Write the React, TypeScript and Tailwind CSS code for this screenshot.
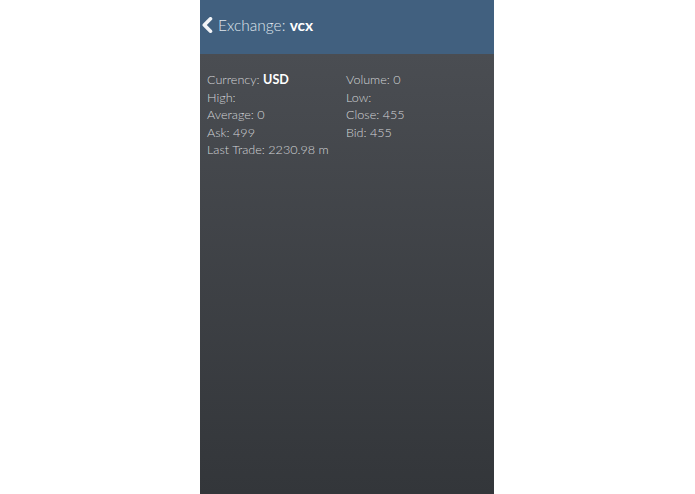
import React from 'react';

const rows: [React.ReactNode, React.ReactNode][] = [
  [<>Currency: <b className="font-bold text-white">USD</b></>, 'Volume: 0'],
  ['High:', 'Low:'],
  ['Average: 0', 'Close: 455'],
  ['Ask: 499', 'Bid: 455'],
  ['Last Trade: 2230.98 m', ''],
];

const App = () => {
  return (
    <div className="w-[695px] h-[494px] bg-white flex">
      <div
        className="w-[294px] h-full flex flex-col ml-[200px]"
        style={{ fontFamily: 'Lato, "Open Sans", sans-serif' }}
      >
        <header className="h-[54px] bg-[#41607f] flex items-start pt-[16px] pl-[1px]">
          <svg width="12" height="16" viewBox="0 0 12 16" className="mt-[1px]">
            <path d="M9.5 1.8 L3.3 8 L9.5 14.2" fill="none" stroke="#f2f4f7" strokeWidth="3.6" strokeLinecap="round" strokeLinejoin="round" />
          </svg>
          <h1 className="ml-[5px] text-[15.5px] font-light text-[#dfe5ec] leading-[18px]">
            Exchange: <span className="font-bold text-white">vcx</span>
          </h1>
        </header>
        <main className="flex-1 bg-gradient-to-b from-[#4a4d52] to-[#33363a] px-[7px] pt-[17px]">
          <div className="grid grid-cols-[139px_1fr] text-[12.6px] leading-[17.5px] font-light text-[#d3d5d8]">
            {rows.map(([a, b], i) => (
              <React.Fragment key={i}>
                <div className="whitespace-nowrap">{a}</div>
                <div className="whitespace-nowrap">{b}</div>
              </React.Fragment>
            ))}
          </div>
        </main>
      </div>
    </div>
  );
};

export default App;
